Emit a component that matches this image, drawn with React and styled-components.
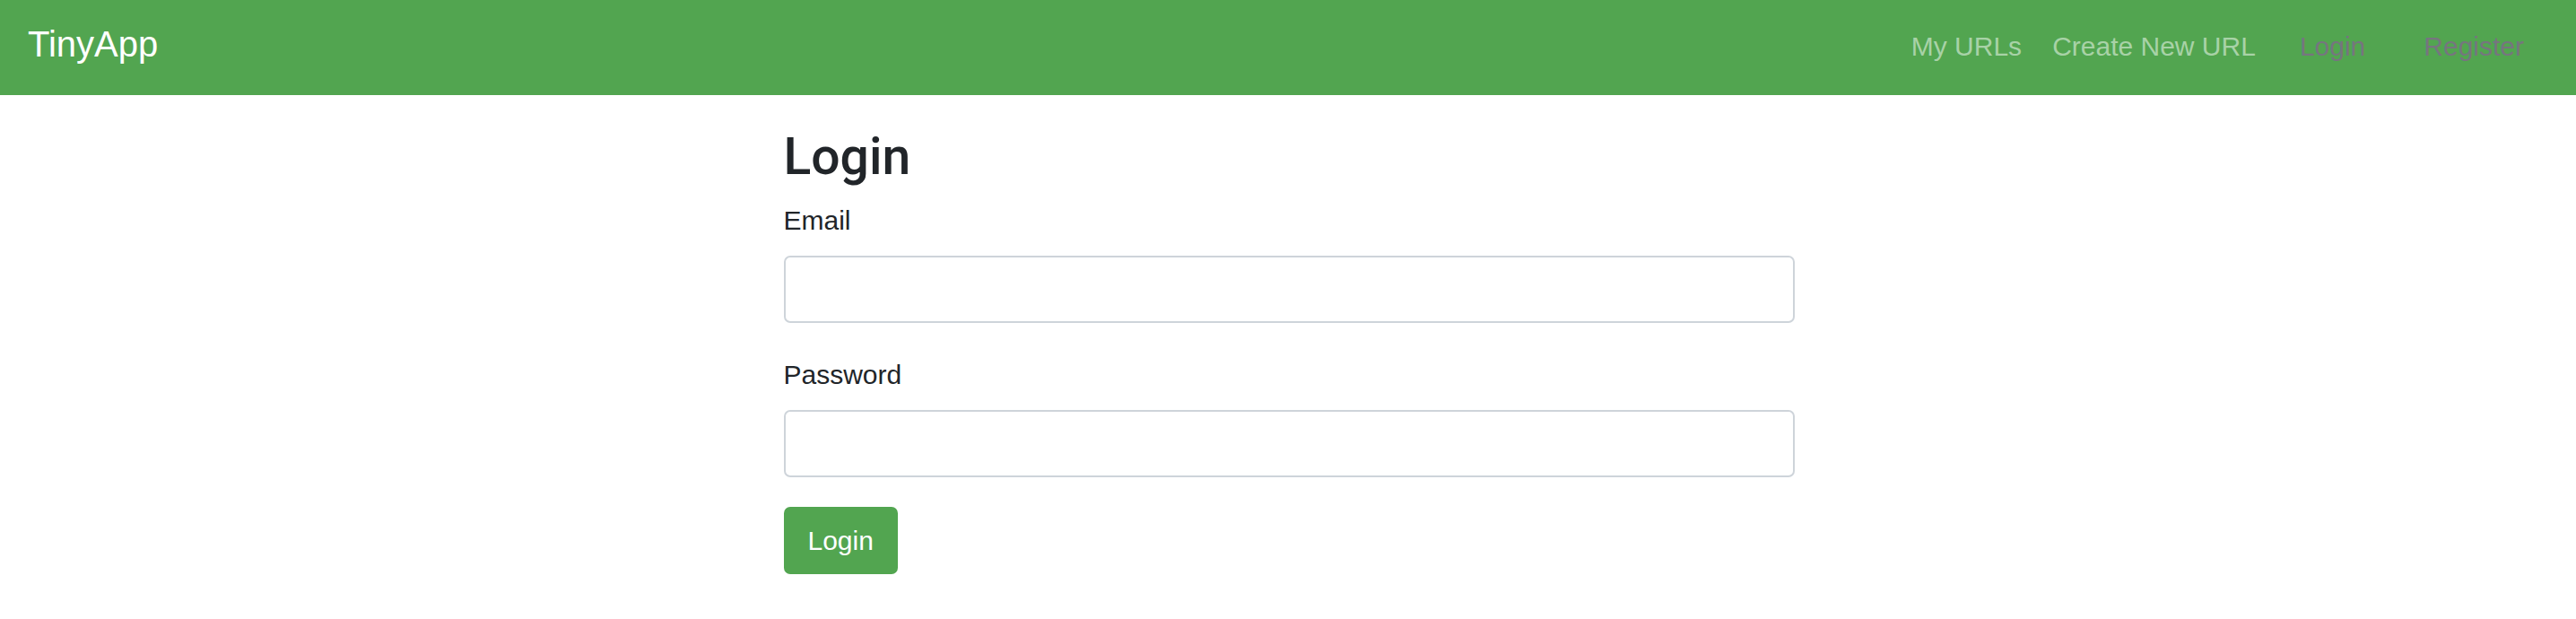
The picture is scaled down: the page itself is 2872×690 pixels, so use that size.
import React from 'react'
import styled, { createGlobalStyle } from 'styled-components'

const GlobalStyle = createGlobalStyle`
    body {
        margin:0;
        background:#fff;
        color:#212529;
        font-family:"Liberation Sans", Arial, sans-serif;
    }
`

const links = [
    { label: 'My URLs', muted: false, space: 0 },
    { label: 'Create New URL', muted: false, space: 34 },
    { label: 'Login', muted: true, space: 49 },
    { label: 'Register', muted: true, space: 65 },
]

const App = () => (
    <>
        <GlobalStyle />
        <NavBar>
            <Brand>TinyApp</Brand>
            <NavLinks>
                {links.map(link => (
                    <NavLink key={link.label} $muted={link.muted} $space={link.space}>
                        {link.label}
                    </NavLink>
                ))}
            </NavLinks>
        </NavBar>
        <Container>
            <Title>Login</Title>
            <FormGroup>
                <Label>Email</Label>
                <Input type="email" />
            </FormGroup>
            <FormGroup>
                <Label>Password</Label>
                <Input type="password" />
            </FormGroup>
            <SubmitButton type="button">Login</SubmitButton>
        </Container>
    </>
)

export default App

const NavBar = styled.nav`
    display:flex;
    justify-content:space-between;
    align-items:center;
    box-sizing:border-box;
    height:106px;
    padding:0 58px 8px 31px;
    background:#52a550;
`
const Brand = styled.a`
    color:#fff;
    font-size:40px;
    line-height:40px;
`
const NavLinks = styled.div`
    display:flex;
    align-items:center;
`
const NavLink = styled.a`
    padding-top:5px;
    margin-left:${p => p.$space}px;
    font-size:30px;
    line-height:30px;
    color:${p => (p.$muted ? '#76757f' : '#a8d2a7')};
    white-space:nowrap;
`
const Container = styled.main`
    width:1127px;
    margin:0 auto;
    padding:35px 0 40px;
    position:relative;
    left:1px;
`
const Title = styled.h2`
    margin:0 0 14px;
    font-family:Roboto, "Liberation Sans", Arial, sans-serif;
    font-weight:500;
    font-size:57px;
    line-height:1.2;
    color:#212529;
`
const FormGroup = styled.div`
    display:flex;
    flex-direction:column;
    margin-bottom:35px;
    &:last-of-type {
        margin-bottom:33px;
    }
`
const Label = styled.label`
    font-size:30px;
    line-height:45px;
    margin-bottom:17px;
    color:#212529;
`
const Input = styled.input`
    box-sizing:border-box;
    width:100%;
    height:75px;
    border:2px solid #ced4da;
    border-radius:7px;
    padding:0 22px;
    font-size:30px;
    background:#fff;
    outline:none;
`
const SubmitButton = styled.button`
    box-sizing:border-box;
    height:75px;
    padding:0 27px;
    border:none;
    border-radius:7px;
    background:#52a550;
    color:#fff;
    font-family:"Liberation Sans", Arial, sans-serif;
    font-size:30px;
    line-height:1;
    cursor:pointer;
`
